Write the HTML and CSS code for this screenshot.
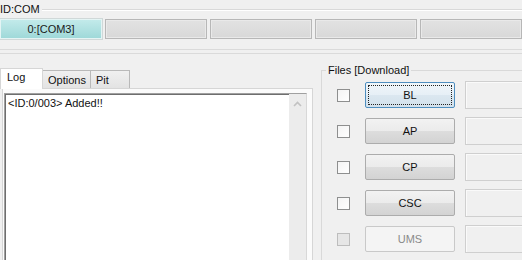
FILE: index.html
```html
<!DOCTYPE html>
<html lang="en">
<head>
    <meta charset="UTF-8">
    <title>Odin</title>
<link rel="stylesheet" href="styles.css">
</head>
<body>
    <div class="com-head">
        <span>ID:COM</span>
        <div class="etch"></div>
    </div>
    <div class="com-slots">
        <div class="slot active">0:[COM3]</div>
        <div class="slot"></div>
        <div class="slot"></div>
        <div class="slot"></div>
        <div class="slot"></div>
    </div>
    <div class="com-foot"></div>

    <div class="main">
        <div class="left">
            <div class="tabs">
                <div class="tab selected">Log</div>
                <div class="tab opt">Options</div>
                <div class="tab pit">Pit</div>
            </div>
            <div class="panel">
                <div class="logbox">
                    <div class="logtext">&lt;ID:0/003&gt; Added!!</div>
                    <div class="scroll">
                        <svg width="9" height="6" viewBox="0 0 9 6"><path d="M1 5 L4.5 1.5 L8 5" fill="none" stroke="#c2c2c2" stroke-width="1.6"/></svg>
                    </div>
                </div>
            </div>
        </div>

        <fieldset class="files">
            <legend>Files [Download]</legend>
            <div class="row">
                <span class="check"></span>
                <button class="btn focus">BL</button>
                <div class="path"></div>
            </div>
            <div class="row">
                <span class="check"></span>
                <button class="btn">AP</button>
                <div class="path"></div>
            </div>
            <div class="row">
                <span class="check"></span>
                <button class="btn">CP</button>
                <div class="path"></div>
            </div>
            <div class="row">
                <span class="check"></span>
                <button class="btn">CSC</button>
                <div class="path"></div>
            </div>
            <div class="row">
                <span class="check off"></span>
                <button class="btn off">UMS</button>
                <div class="path"></div>
            </div>
        </fieldset>
    </div>
</body>
</html>
```

FILE: styles.css
```css
*
{
    box-sizing: border-box;
}
body
{
    margin: 0;
    width: 522px;
    height: 260px;
    overflow: hidden;
    background: #f0f0f0;
    font-family: "Liberation Sans", Arial, sans-serif;
    font-size: 11px;
    line-height: 13px;
    color: #111;
}
.com-head
{
    display: flex;
    align-items: center;
    height: 19px;
}
.com-head span
{
    padding-right: 2px;
}
.etch
{
    flex: 1;
    height: 2px;
    border-top: 1px solid #d9d9d9;
    border-bottom: 1px solid #fff;
}
.com-slots
{
    display: grid;
    grid-template-columns: repeat(5, 102px);
    gap: 3px;
    height: 20px;
}
.slot
{
    background: linear-gradient(#e2e2e2, #d8d8d8);
    border: 1px solid #b7b7b7;
    box-shadow: inset 0 0 0 1px #e9e9e9;
    text-align: center;
    line-height: 18px;
}
.slot.active
{
    background: linear-gradient(#c2eaea, #9fd9d9);
    border: 1px solid #e4f4f4;
    box-shadow: 0 0 0 1px #d0d8d8;
    color: #1a1a1a;
}
.com-foot
{
    margin-top: 10px;
    height: 5px;
    border-top: 1px solid #dadada;
    border-bottom: 1px solid #dadada;
}

.main
{
    display: flex;
    align-items: flex-start;
}
.left
{
    width: 313px;
    padding-top: 14px;
}
.tabs
{
    display: flex;
    align-items: flex-start;
    height: 20px;
}
.tab
{
    height: 18px;
    margin-top: 2px;
    padding-left: 5px;
    line-height: 18px;
    background: linear-gradient(#f0f0f0, #e3e3e3);
    border: 1px solid #b9b9b9;
    border-bottom: 0;
}
.tab.selected
{
    position: relative;
    z-index: 1;
    width: 43px;
    height: 21px;
    margin-top: 0;
    padding-left: 6px;
    line-height: 17px;
    background: #fff;
    border-color: #d6d6d6;
}
.tab.opt
{
    width: 48px;
    border-left: 0;
}
.tab.pit
{
    width: 39px;
    border-left: 0;
    padding-left: 5px;
}
.panel
{
    margin-left: 2px;
    width: 311px;
    height: 172px;
    padding: 4px 5px 0 1px;
    background: #fbfbfb;
    border: 1px solid #d6d6d6;
    border-bottom: 0;
}
.logbox
{
    display: flex;
    height: 167px;
    background: #fff;
    border: 1px solid #a0a0a0;
    border-right-color: #d8d8d8;
    border-bottom: 0;
    box-shadow: inset 1px 1px 0 #6e6e6e;
}
.logtext
{
    flex: 1;
    padding: 3px 2px 0 3px;
}
.scroll
{
    width: 17px;
    background: #ececec;
    display: flex;
    justify-content: center;
    padding-top: 7px;
}
.scroll svg
{
    display: block;
}

.files
{
    flex: 1;
    margin: 10px -10px 0 8px;
    padding: 4px 0 0 15px;
    height: 196px;
    min-width: 0;
    border: 1px solid #d9d9d9;
    border-right: 0;
    border-bottom: 0;
}
.files legend
{
    margin-left: -11px;
    padding: 0 2px;
}
.row
{
    display: flex;
    align-items: center;
    height: 28px;
    margin-bottom: 8px;
}
.row:last-child
{
    margin-bottom: 0;
}
.check
{
    width: 13px;
    height: 13px;
    background: linear-gradient(135deg, #f4f4f4, #fff);
    border: 1px solid #8e8f8f;
    margin-right: 15px;
}
.check.off
{
    background: #e6e6e6;
    border-color: #bdbdbd;
}
.btn
{
    width: 90px;
    height: 26px;
    font: inherit;
    color: #111;
    background: linear-gradient(#f2f2f2, #ebebeb 50%, #dddddd 50%, #d3d3d3);
    border: 1px solid #acacac;
    border-radius: 2px;
    margin-right: 10px;
    padding: 0;
}
.btn.focus
{
    border-color: #4f8ebf;
    background: linear-gradient(#f0f6fa, #e6eff6 50%, #dbe7f0 50%, #d3e1ec);
    outline: 1px dotted #222;
    outline-offset: -4px;
}
.btn.off
{
    background: #f4f4f4;
    border-color: #c9c9c9;
    color: #8a8a8a;
}
.path
{
    flex: 1;
    height: 28px;
    background: #f0f0f0;
    border: 1px solid #cfcfcf;
    box-shadow: inset 1px 1px 0 #fafafa;
}
```
